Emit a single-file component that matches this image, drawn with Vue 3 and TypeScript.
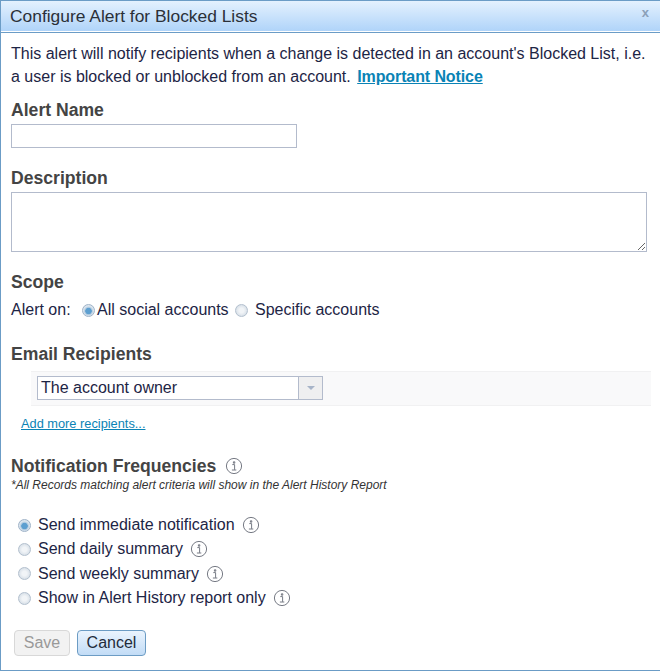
<script setup lang="ts">
const frequencies = [
  { label: 'Send immediate notification', checked: true },
  { label: 'Send daily summary', checked: false },
  { label: 'Send weekly summary', checked: false },
  { label: 'Show in Alert History report only', checked: false },
]
</script>

<template>
  <div class="dialog">
    <header class="titlebar">
      <span class="title">Configure Alert for Blocked Lists</span>
      <span class="close">x</span>
    </header>
    <main class="body">
      <p class="intro">
        This alert will notify recipients when a change is detected in an account's Blocked List, i.e.<br />
        a user is blocked or unblocked from an account. <a class="notice">Important Notice</a>
      </p>

      <h2 class="heading name-heading">Alert Name</h2>
      <input class="name-input" type="text" />

      <h2 class="heading desc-heading">Description</h2>
      <textarea class="desc-input"></textarea>

      <h2 class="heading scope-heading">Scope</h2>
      <div class="scope-row">
        <span class="alert-on">Alert on:</span>
        <span class="radio checked"></span>
        <span class="all">All social accounts</span>
        <span class="radio"></span>
        <span class="specific">Specific accounts</span>
      </div>

      <h2 class="heading email-heading">Email Recipients</h2>
      <div class="recipient-row">
        <div class="select">
          <span class="select-value">The account owner</span>
          <span class="select-btn"><span class="caret"></span></span>
        </div>
      </div>
      <a class="add-more">Add more recipients...</a>

      <div class="freq-head">
        <h2 class="heading">Notification Frequencies</h2>
        <svg class="info" viewBox="0 0 18 18"><circle cx="9" cy="9" r="7.6" /><path d="M7.3 7.6h2.3v5.2M6.9 13h4.4M8.4 4.8h1.4v1.4H8.4z" /></svg>
      </div>
      <p class="note">*All Records matching alert criteria will show in the Alert History Report</p>

      <ul class="freq-list">
        <li v-for="f in frequencies" :key="f.label" class="freq-item">
          <span class="radio" :class="{ checked: f.checked }"></span>
          <span class="freq-label">{{ f.label }}</span>
          <svg class="info" viewBox="0 0 18 18"><circle cx="9" cy="9" r="7.6" /><path d="M7.3 7.6h2.3v5.2M6.9 13h4.4M8.4 4.8h1.4v1.4H8.4z" /></svg>
        </li>
      </ul>

      <div class="actions">
        <button class="btn save" type="button">Save</button>
        <button class="btn cancel" type="button">Cancel</button>
      </div>
    </main>
  </div>
</template>

<style>
html, body { margin: 0; background: #fff; }
</style>

<style scoped>
.dialog {
  box-sizing: border-box;
  width: 660px;
  height: 671px;
  border: 1px solid #6b9cc6;
  border-right: 0;
  font-family: "Liberation Sans", Arial, sans-serif;
  font-size: 16px;
  color: #1d2545;
  background: #fff;
  overflow: hidden;
}
.titlebar {
  box-sizing: border-box;
  height: 32px;
  display: flex;
  justify-content: space-between;
  padding: 5px 11px 0 9px;
  background: linear-gradient(#e4f1fe, #aed3f9);
  border-bottom: 1px solid #6b9cc6;
  box-shadow: inset 0 -1px 0 #fff;
}
.title { font-size: 17.4px; line-height: 20px; color: #2b3038; }
.close { font-size: 13px; line-height: 12px; margin-top: 1px; font-weight: 700; color: #8ba0b8; }
.body { padding: 9px 0 0 10px; }
.intro { margin: 0; line-height: 23px; }
.notice {
  margin-left: 2px;
  font-weight: 700;
  letter-spacing: -0.1px;
  color: #0a83b5;
  text-decoration: underline;
}
.heading {
  margin: 0;
  font-size: 17.6px;
  line-height: 22px;
  font-weight: 700;
  color: #444;
}
.name-heading { margin-top: 11px; }
.name-input {
  display: block;
  box-sizing: border-box;
  width: 286px;
  height: 24px;
  margin-top: 3px;
  border: 1px solid #b3bbcc;
  outline: 0;
  padding: 0;
}
.desc-heading { margin-top: 19px; }
.desc-input {
  display: block;
  box-sizing: border-box;
  width: 636px;
  height: 60px;
  margin-top: 3px;
  border: 1px solid #b3bbcc;
  outline: 0;
  padding: 0;
}
.scope-heading { margin-top: 19px; }
.scope-row {
  display: flex;
  align-items: center;
  height: 24px;
  margin-top: 5px;
}
.alert-on { width: 71px; }
.radio {
  box-sizing: border-box;
  flex: none;
  width: 13px;
  height: 13px;
  border-radius: 50%;
  border: 1px solid #b3c0ce;
  background: radial-gradient(circle at 50% 50%, #f1f4f7 0 30%, #c9d4df 100%);
}
.radio.checked {
  background: radial-gradient(circle at 50% 55%, #5d9fd0 0 36%, #a9c6de 42%, #dbe5ee 60%);
  border-color: #9fb3c8;
}
.all { margin-left: 2px; width: 138px; white-space: nowrap; }
.specific { margin-left: 7px; }
.email-heading { margin-top: 21px; }
.recipient-row {
  box-sizing: border-box;
  height: 35px;
  margin: 6px 0 0 20px;
  padding: 4px 0 0 6px;
  width: 620px;
  background: #f9f9fa;
  border-top: 1px solid #f1f1f2;
  border-bottom: 1px solid #f1f1f2;
}
.select {
  box-sizing: border-box;
  display: flex;
  width: 286px;
  height: 24px;
  border: 1px solid #b3bbcc;
  background: #fff;
}
.select-value { flex: 1; line-height: 22px; padding-left: 3px; }
.select-btn {
  box-sizing: border-box;
  width: 24px;
  display: flex;
  align-items: center;
  justify-content: center;
  border-left: 1px solid #b3bbcc;
  background: #efeff0;
}
.caret {
  width: 0;
  height: 0;
  border-left: 4px solid transparent;
  border-right: 4px solid transparent;
  border-top: 4px solid #a7b4c8;
}
.add-more {
  display: block;
  margin: 9px 0 0 10px;
  font-size: 12.8px;
  line-height: 18px;
  color: #0a83b5;
  text-decoration: underline;
}
.freq-head {
  display: flex;
  align-items: center;
  margin-top: 22px;
}
.freq-head .info { margin-left: 9px; }
.info {
  flex: none;
  width: 18px;
  height: 18px;
  fill: none;
  stroke: #666b76;
  stroke-width: 0.9;
}
.note {
  margin: 1px 0 0;
  font-size: 12px;
  line-height: 15px;
  font-style: italic;
  color: #333;
}
.freq-list {
  list-style: none;
  margin: 20px 0 0;
  padding: 0 0 0 7px;
}
.freq-item {
  display: flex;
  align-items: center;
  height: 24.3px;
}
.freq-label { margin-left: 7px; margin-right: 7px; white-space: nowrap; }
.actions {
  display: flex;
  gap: 7px;
  margin: 20px 0 0 3px;
}
.btn {
  box-sizing: border-box;
  height: 26px;
  padding: 0;
  border-radius: 4px;
  font-family: inherit;
  font-size: 16px;
}
.save {
  width: 56px;
  border: 1px solid #d8d8d8;
  background: #f2f2f2;
  color: #999;
}
.cancel {
  width: 69px;
  border: 1px solid #6c9cc4;
  background: linear-gradient(#eaf4fe, #c2dcf6);
  color: #222b3a;
}
</style>
